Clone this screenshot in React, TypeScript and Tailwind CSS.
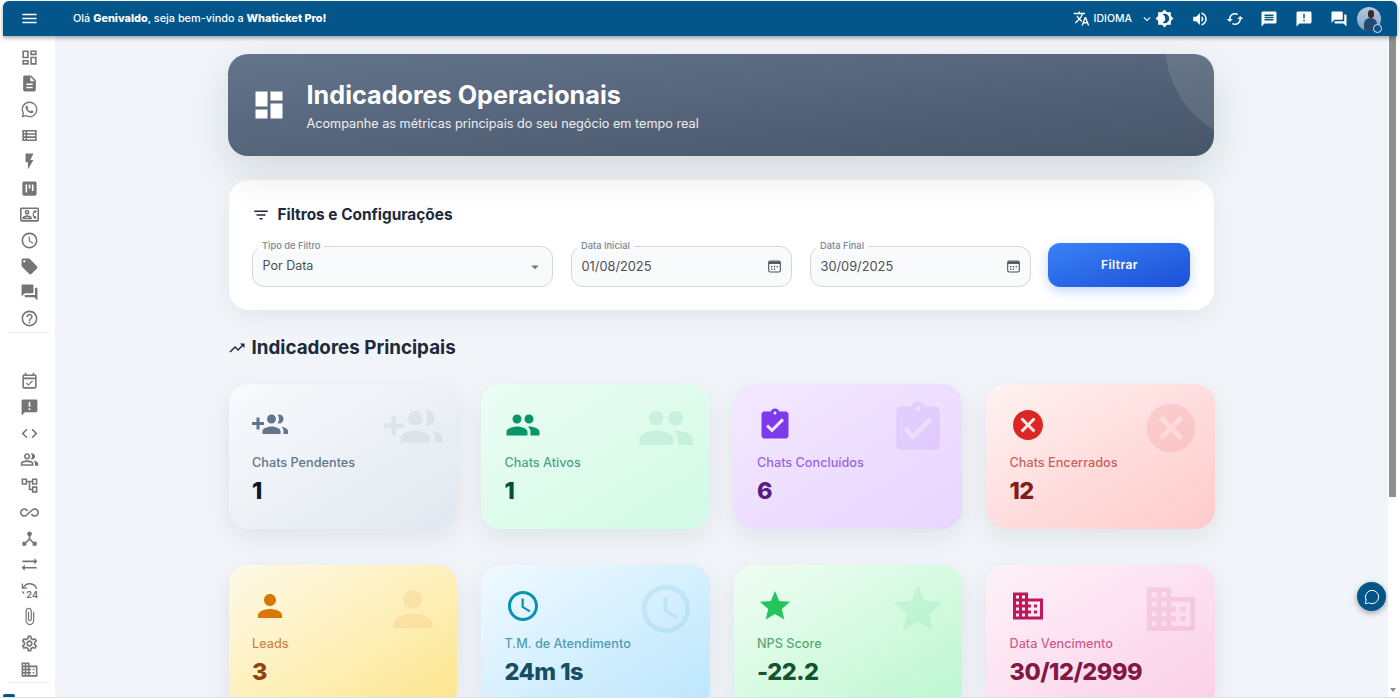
import React from "react";
import {
  MdMenu, MdTranslate, MdExpandMore, MdBrightness4, MdVolumeUp, MdCached, MdMessage, MdAnnouncement, MdQuestionAnswer,
  MdOutlineDashboard, MdDescription, MdWhatsapp, MdOutlineViewList, MdFlashOn, MdViewKanban, MdOutlineContactPhone,
  MdAccessTime, MdLocalOffer, MdForum, MdHelpOutline, MdOutlineEventAvailable, MdCode, MdOutlinePeopleAlt,
  MdOutlineAccountTree, MdAllInclusive, MdDeviceHub, MdSyncAlt, MdAttachFile, MdOutlineSettings, MdOutlineBusiness,
  MdDashboard, MdFilterList, MdTrendingUp, MdArrowDropDown, MdPeople,
  MdAssignmentTurnedIn, MdCancel, MdPerson, MdSchedule, MdStar, MdBusiness,
} from "react-icons/md";
import { MessageCircle } from "lucide-react";

const Restore24 = () => (
  <svg width="19" height="19" viewBox="0 0 24 24" fill="none" stroke="currentColor" strokeWidth="1.8">
    <path d="M4 9 A9 9 0 0 1 21 10" />
    <path d="M3 3 V9 H9" strokeWidth="1.6" />
    <path d="M3 13 L5 16" />
    <text x="8" y="21" fontSize="11.5" fontWeight="700" fill="currentColor" stroke="none" fontFamily="Inter, sans-serif">24</text>
  </svg>
);

const GroupAddLeft = ({ size, className }: { size?: number; className?: string }) => (
  <svg width={size} height={size} viewBox="0 0 24 24" fill="currentColor" className={className}>
    <path d="M8 10H5V7H3v3H0v2h3v3h2v-3h3v-2zm10 1c1.66 0 2.99-1.34 2.99-3S19.66 5 18 5c-.32 0-.63.05-.91.14.57.81.9 1.79.9 2.86s-.34 2.04-.9 2.86c.28.09.59.14.91.14zm-5 0c1.66 0 2.99-1.34 2.99-3S14.66 5 13 5s-3 1.34-3 3 1.34 3 3 3zm6.62 2.16c.83.73 1.38 1.66 1.38 2.84v2h3v-2c0-1.54-2.37-2.49-4.38-2.84zM13 13c-2 0-6 1-6 3v2h12v-2c0-2-4-3-6-3z" />
  </svg>
);

const CalendarIcon = () => (
  <svg width="13" height="13" viewBox="0 0 13 13" fill="none" className="text-[#4b4f55]">
    <rect x="0.7" y="1" width="11.6" height="11" rx="1.6" stroke="currentColor" strokeWidth="1.1" />
    <rect x="1" y="1.5" width="11" height="2.4" fill="currentColor" />
    <g fill="currentColor">
      <rect x="3" y="6" width="1.4" height="1.3" />
      <rect x="5.8" y="6" width="1.4" height="1.3" />
      <rect x="8.6" y="6" width="1.4" height="1.3" />
      <rect x="3" y="8.5" width="1.4" height="1.3" />
      <rect x="5.8" y="8.5" width="1.4" height="1.3" />
    </g>
  </svg>
);

const topGroup = [MdOutlineDashboard, MdDescription, MdWhatsapp, MdOutlineViewList, MdFlashOn, MdViewKanban, MdOutlineContactPhone, MdAccessTime, MdLocalOffer, MdForum, MdHelpOutline];
const bottomGroup = [MdOutlineEventAvailable, MdAnnouncement, MdCode, MdOutlinePeopleAlt, MdOutlineAccountTree, MdAllInclusive, MdDeviceHub, MdSyncAlt, Restore24, MdAttachFile, MdOutlineSettings, MdOutlineBusiness];

function SideItem({ Icon }: { Icon: React.ComponentType<{ size?: number }> }) {
  return (
    <div className="flex h-[26.2px] items-center justify-center text-[#757575]">
      <Icon size={19} />
    </div>
  );
}

function Field({ label, value, icon, width, textC }: { label: string; value: string; icon: React.ReactNode; width: string; textC: string }) {
  return (
    <div className={`relative flex h-[41px] items-center justify-between rounded-xl border border-[#d4d6d9] bg-[#f9fafb] pl-[10px] pr-[10px] ${width}`}>
      <span className={`text-[#4b4f55] ${textC}`}>{value}</span>
      {icon}
      <span className="absolute -top-[7px] left-[5.5px] bg-[#fbfcfc] px-[4px] text-[9.3px] font-medium leading-[12px] text-[#7b8794]">{label}</span>
    </div>
  );
}

type CardProps = {
  Icon: React.ComponentType<{ size?: number; className?: string }>;
  label: string;
  value: string;
  bg: string;
  iconC: string;
  labelC: string;
  valueC: string;
  ghostC: string;
};

function Card({ Icon, label, value, bg, iconC, labelC, valueC, ghostC }: CardProps) {
  return (
    <div className={`relative h-[145px] overflow-hidden rounded-[20px] py-[23px] pl-[23.5px] shadow-[0_8px_24px_rgba(15,23,42,0.08)] ${bg}`}>
      <Icon size={58} className={`absolute right-[15px] top-[15px] ${ghostC}`} />
      <Icon size={36} className={iconC} />
      <div className={`mt-[11px] text-[12.7px] font-medium leading-[18px] ${labelC}`}>{label}</div>
      <div className={`mt-[4px] text-[23.5px] font-extrabold leading-[30px] tracking-[-0.5px] ${valueC}`}>{value}</div>
    </div>
  );
}

export default function App() {
  return (
    <div className="relative flex h-[698px] w-[1400px] flex-col overflow-hidden bg-white [font-family:Inter,sans-serif]">
      <header className="z-10 mx-[3px] mt-[1px] flex h-[35px] shrink-0 items-center rounded-t-md bg-[#03558a] pl-[17px] pr-[16px] text-white shadow-[0_2px_4px_rgba(0,0,0,0.35)]">
        <MdMenu size={19} />
        <div className="ml-[34px] flex-1 text-[10.9px] font-medium">
          Olá <b className="font-extrabold">Genivaldo</b>, seja bem-vindo a <b className="font-extrabold">Whaticket Pro!</b>
        </div>
        <MdTranslate size={17} className="mr-[4px]" />
        <span className="text-[10.5px] font-medium">IDIOMA</span>
        <MdExpandMore size={14} className="ml-[8px]" />
        <MdBrightness4 size={19} className="ml-[1px]" />
        <MdVolumeUp size={18} className="ml-[17px]" />
        <MdCached size={18} className="ml-[17px]" />
        <MdMessage size={18} className="ml-[16px]" />
        <MdAnnouncement size={18} className="ml-[17px]" />
        <MdQuestionAnswer size={18} className="ml-[17px]" />
        <div className="relative ml-[9px] h-[24px] w-[24px] rounded-full bg-gradient-to-b from-[#b4c8de] to-[#7ea3c8]">
          <div className="absolute inset-0 overflow-hidden rounded-full">
            <div className="absolute left-[11px] top-[3px] h-[8px] w-[6px] rounded-full bg-[#3a2a22]" />
            <div className="absolute left-[7px] top-[11px] h-[13px] w-[13px] rounded-t-md bg-[#24466f]" />
          </div>
          <div className="absolute -bottom-[2px] -right-[1px] h-[9px] w-[9px] rounded-full border-[1.5px] border-[#dfe7ef] bg-[#03558a]" />
        </div>
      </header>

      <div className="flex min-h-0 flex-1 pb-[1px] pl-[3px]">
        <aside className="flex w-[52px] shrink-0 flex-col bg-white pt-[8px]">
          {topGroup.map((I, i) => <SideItem key={i} Icon={I} />)}
          <div className="mx-[6px] h-px bg-[#eeeeee]" />
          <div className="h-[35px]" />
          {bottomGroup.map((I, i) => <SideItem key={i} Icon={I} />)}
          <div className="mx-[6px] h-px bg-[#eeeeee]" />
        </aside>

        <main className="relative min-w-0 flex-1 overflow-hidden bg-[#f1f5f9] pr-[2px]">
          <div className="mx-auto w-[986px] pt-[18px]">
            <section className="relative flex h-[102px] items-center overflow-hidden rounded-[20px] bg-gradient-to-br from-[#64748b] to-[#475569] pl-[23px] pt-[2px] shadow-[0_16px_40px_rgba(15,23,42,0.12)]">
              <div className="absolute -right-[151px] -top-[110px] h-[200px] w-[200px] rounded-full bg-white/10" />
              <MdDashboard size={36} className="-mt-[2px] text-white" />
              <div className="ml-[20px]">
                <h1 className="text-[25.2px] font-bold leading-[32px] text-white">Indicadores Operacionais</h1>
                <p className="mt-[4px] text-[12.7px] leading-[18px] text-white/90">Acompanhe as métricas principais do seu negócio em tempo real</p>
              </div>
            </section>

            <section className="ml-[1px] mt-[24px] h-[130px] rounded-[20px] bg-white px-[23px] pt-[24px] shadow-[0_8px_24px_rgba(15,23,42,0.06)]">
              <div className="flex h-[22px] items-center text-[#1e293b]">
                <MdFilterList size={18} />
                <h2 className="ml-[8px] text-[15.4px] font-bold">Filtros e Configurações</h2>
              </div>
              <div className="mt-[20px] flex items-start">
                <Field label="Tipo de Filtro" value="Por Data" textC="text-[12.5px]" width="w-[301px]" icon={<MdArrowDropDown size={18} className="-mr-[2px] text-[#757575]" />} />
                <div className="ml-[18px]"><Field label="Data Inicial" value="01/08/2025" textC="text-[12.8px]" width="w-[221px]" icon={<CalendarIcon />} /></div>
                <div className="ml-[18px]"><Field label="Data Final" value="30/09/2025" textC="text-[12.8px]" width="w-[221px]" icon={<CalendarIcon />} /></div>
                <button className="-mt-[3px] ml-[17px] h-[44px] w-[142px] rounded-xl bg-gradient-to-br from-[#3b82f6] to-[#1d4ed8] pl-[2px] text-[12px] font-semibold tracking-[0.4px] text-white shadow-[0_4px_12px_rgba(59,130,246,0.3)]">Filtrar</button>
              </div>
            </section>

            <div className="mt-[24px] flex h-[28px] items-center text-[#1e293b]">
              <MdTrendingUp size={18} />
              <h2 className="ml-[6px] text-[18.8px] font-bold">Indicadores Principais</h2>
            </div>

            <div className="-mr-[1px] ml-[1px] mt-[22px] grid grid-cols-4 gap-x-[24px] gap-y-[36px]">
              <Card Icon={GroupAddLeft} label="Chats Pendentes" value="1" bg="bg-gradient-to-br from-[#f8fafc] to-[#e2e8f0]" iconC="text-[#64748b]" labelC="text-[#64748b]" valueC="text-[#0f172a]" ghostC="text-[#64748b]/10" />
              <Card Icon={MdPeople} label="Chats Ativos" value="1" bg="bg-gradient-to-br from-[#ecfdf5] to-[#d1fae5]" iconC="text-[#059669]" labelC="text-[#047857]/70" valueC="text-[#064e3b]" ghostC="text-[#059669]/10" />
              <Card Icon={MdAssignmentTurnedIn} label="Chats Concluídos" value="6" bg="bg-gradient-to-br from-[#f3e8ff] to-[#e9d5ff]" iconC="text-[#7c3aed]" labelC="text-[#6d28d9]/70" valueC="text-[#581c87]" ghostC="text-[#7c3aed]/10" />
              <Card Icon={MdCancel} label="Chats Encerrados" value="12" bg="bg-gradient-to-br from-[#fef2f2] to-[#fecaca]" iconC="text-[#dc2626]" labelC="text-[#b91c1c]/70" valueC="text-[#7f1d1d]" ghostC="text-[#dc2626]/10" />
              <Card Icon={MdPerson} label="Leads" value="3" bg="bg-gradient-to-br from-[#fef9e7] to-[#fde68a]" iconC="text-[#d97706]" labelC="text-[#b45309]/70" valueC="text-[#92400e]" ghostC="text-[#d97706]/10" />
              <Card Icon={MdSchedule} label="T.M. de Atendimento" value="24m 1s" bg="bg-gradient-to-br from-[#f0f9ff] to-[#bae6fd]" iconC="text-[#0891b2]" labelC="text-[#0e7490]/70" valueC="text-[#164e63]" ghostC="text-[#0891b2]/10" />
              <Card Icon={MdStar} label="NPS Score" value="-22.2" bg="bg-gradient-to-br from-[#f0fdf4] to-[#bbf7d0]" iconC="text-[#22c55e]" labelC="text-[#15803d]/70" valueC="text-[#14532d]" ghostC="text-[#22c55e]/10" />
              <Card Icon={MdBusiness} label="Data Vencimento" value="30/12/2999" bg="bg-gradient-to-br from-[#fdf2f8] to-[#fbcfe8]" iconC="text-[#be185d]" labelC="text-[#be185d]/70" valueC="text-[#831843]" ghostC="text-[#be185d]/10" />
            </div>
          </div>

          <div className="absolute left-[1302px] top-[546px] flex h-[29px] w-[29px] items-center justify-center rounded-full bg-[#03558a] text-white shadow-[0_2px_6px_rgba(0,0,0,0.35)]">
            <MessageCircle size={16} strokeWidth={1.5} />
          </div>
        </main>

        <div className="relative w-[12px] shrink-0 bg-white">
          <div className="ml-[1px] h-[461px] w-[7px] bg-[#8f8f8f]" />
          <div className="absolute bottom-[5px] left-[2px] h-0 w-0 border-x-[3px] border-t-[4px] border-x-transparent border-t-[#8f8f8f]" />
        </div>
      </div>
      <div className="absolute bottom-0 left-[3px] h-[4px] w-[12px] rounded-full bg-[#03558a]" />
      <div className="absolute bottom-0 left-0 h-px w-full bg-[#dfe1e4]" />
    </div>
  );
}
